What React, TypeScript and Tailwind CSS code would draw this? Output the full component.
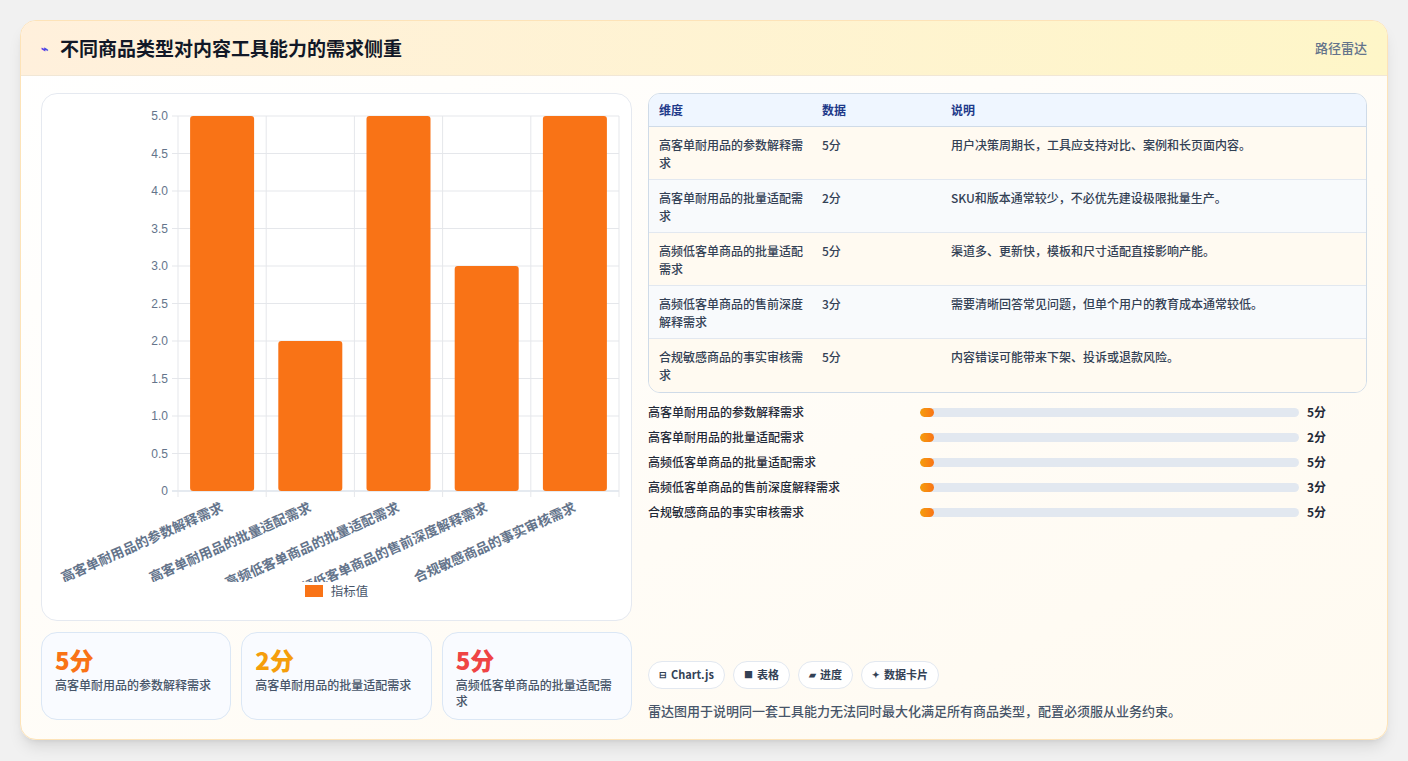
const items = [
  { name: "高客单耐用品的参数解释需求", v: 5, note: "用户决策周期长，工具应支持对比、案例和长页面内容。" },
  { name: "高客单耐用品的批量适配需求", v: 2, note: "SKU和版本通常较少，不必优先建设极限批量生产。" },
  { name: "高频低客单商品的批量适配需求", v: 5, note: "渠道多、更新快，模板和尺寸适配直接影响产能。" },
  { name: "高频低客单商品的售前深度解释需求", v: 3, note: "需要清晰回答常见问题，但单个用户的教育成本通常较低。" },
  { name: "合规敏感商品的事实审核需求", v: 5, note: "内容错误可能带来下架、投诉或退款风险。" },
];

const font = { fontFamily: '"Noto Sans CJK SC", "Noto Sans", sans-serif' };

function BarChart() {
  const x0 = 136, x1 = 577, y0 = 22, y1 = 397;
  const step = (x1 - x0) / 5;
  const ticks = [0, 0.5, 1, 1.5, 2, 2.5, 3, 3.5, 4, 4.5, 5];
  const yOf = (v: number) => y1 - ((y1 - y0) * v) / 5;
  return (
    <svg width="590" height="488" style={font}>
      {ticks.map((t) => (
        <g key={t}>
          <line x1={x0 - 6} x2={x1} y1={yOf(t)} y2={yOf(t)} stroke={t === 0 ? "#cbd5e1" : "#e5e7eb"} />
          <text x={x0 - 10} y={yOf(t) + 4} textAnchor="end" fontSize="12" fill="#64748b" fontFamily="Liberation Sans, sans-serif">
            {t === 0 ? "0" : t.toFixed(1)}
          </text>
        </g>
      ))}
      {[0, 1, 2, 3, 4, 5].map((i) => (
        <line key={i} x1={x0 + i * step} x2={x0 + i * step} y1={y0} y2={y1 + 6} stroke="#e5e7eb" />
      ))}
      {items.map((it, i) => {
        const cx = x0 + step * i + step / 2;
        return (
          <g key={it.name}>
            <rect x={cx - 32} y={yOf(it.v)} width="64" height={y1 - yOf(it.v)} rx="3" fill="#f97316" />
            <text
              x={cx + 2}
              y={y1 + 20}
              textAnchor="end"
              fontSize="13.5"
              fontWeight="700"
              fill="#64748b"
              transform={`rotate(-24 ${cx + 2} ${y1 + 20})`}
            >
              {it.name}
            </text>
          </g>
        );
      })}
    </svg>
  );
}

export default function App() {
  const cards = [
    { v: "5分", c: "text-[#f97316]", t: items[0].name },
    { v: "2分", c: "text-[#f59e0b]", t: items[1].name },
    { v: "5分", c: "text-[#ef4444]", t: items[2].name },
  ];
  return (
    <div className="w-[1408px] h-[761px] bg-[#f1f1f1] pt-5 px-5" style={font}>
      <div className="h-[720px] rounded-2xl border border-[#fde3b8] bg-gradient-to-br from-white to-[#fffaf0] shadow-lg overflow-hidden flex flex-col">
        <div className="h-[55px] shrink-0 flex items-center justify-between px-5 bg-gradient-to-r from-[#fff0dc] to-[#fef6c8] border-b border-[#f1e7d6]">
          <div className="flex items-center gap-3">
            <span className="text-[#4f46e5] text-[12px] font-bold">⌁</span>
            <h1 className="text-[19px] font-bold text-[#111827]">不同商品类型对内容工具能力的需求侧重</h1>
          </div>
          <span className="text-[13px] text-[#64748b] font-medium">路径雷达</span>
        </div>
        <div className="flex-1 flex gap-4 px-5 pt-[17px] pb-[19px]">
          <div className="w-[591px] flex flex-col gap-[11px]">
            <div className="h-[528px] rounded-2xl border border-[#e5e9f0] bg-white flex flex-col items-center">
              <BarChart />
              <div className="flex items-center gap-2">
                <span className="w-[18px] h-[12px] bg-[#f97316]" />
                <span className="text-[12.5px] text-[#475569]">指标值</span>
              </div>
            </div>
            <div className="flex gap-[10px] flex-1">
              {cards.map((c, i) => (
                <div key={i} className="flex-1 rounded-2xl border border-[#dbe7f5] bg-[#f9fbff] px-[13px] pt-[10px]">
                  <div className={`text-[24px] font-extrabold leading-[34px] ${c.c}`}>{c.v}</div>
                  <div className="text-[12px] text-[#475569] leading-[16px] font-medium">{c.t}</div>
                </div>
              ))}
            </div>
          </div>
          <div className="flex-1 flex flex-col">
            <div className="rounded-xl border border-[#cfdbe8] overflow-hidden">
              <div className="flex h-[33px] items-center bg-[#eff6ff] border-b border-[#cfdbe8] text-[12px] font-bold text-[#1e3a8a]">
                <div className="w-[173px] pl-[10px]">维度</div>
                <div className="w-[129px]">数据</div>
                <div className="flex-1">说明</div>
              </div>
              {items.map((it, i) => (
                <div
                  key={it.name}
                  className={`flex h-[53px] pt-[9px] text-[12px] leading-[18px] font-medium text-[#334155] ${i < 4 ? "border-b border-[#e2e8f0]" : ""} ${i % 2 === 0 ? "bg-[#fffaf1]" : "bg-[#f8fafc]"}`}
                >
                  <div className="w-[173px] pl-[10px] pr-3">{it.name}</div>
                  <div className="w-[129px]">{it.v}分</div>
                  <div className="flex-1">{it.note}</div>
                </div>
              ))}
            </div>
            <div className="flex flex-col gap-[7px] mt-[10px]">
              {items.map((it) => (
                <div key={it.name} className="flex items-center h-[18px] text-[12px] font-medium text-[#1f2937]">
                  <div className="w-[272px]">{it.name}</div>
                  <div className="w-[379px] h-[9px] rounded-full bg-[#e2e8f0] overflow-hidden">
                    <div className="w-[14px] h-full rounded-full bg-gradient-to-r from-[#f59e0b] to-[#f97316]" />
                  </div>
                  <div className="ml-2 font-bold">{it.v}分</div>
                </div>
              ))}
            </div>
            <div className="flex-1" />
            <div className="flex gap-2">
              {[
                ["⊟", "Chart.js"],
                ["■", "表格"],
                ["▰", "进度"],
                ["✦", "数据卡片"],
              ].map(([g, t]) => (
                <span key={t} className="h-[28px] px-[10px] flex items-center gap-1 rounded-full border border-[#e2e8f0] bg-white text-[11px] font-bold text-[#334155]">
                  <span className="text-[9px]">{g}</span>
                  {t}
                </span>
              ))}
            </div>
            <p className="mt-[12px] text-[13px] text-[#475569] font-medium">雷达图用于说明同一套工具能力无法同时最大化满足所有商品类型，配置必须服从业务约束。</p>
          </div>
        </div>
      </div>
    </div>
  );
}
